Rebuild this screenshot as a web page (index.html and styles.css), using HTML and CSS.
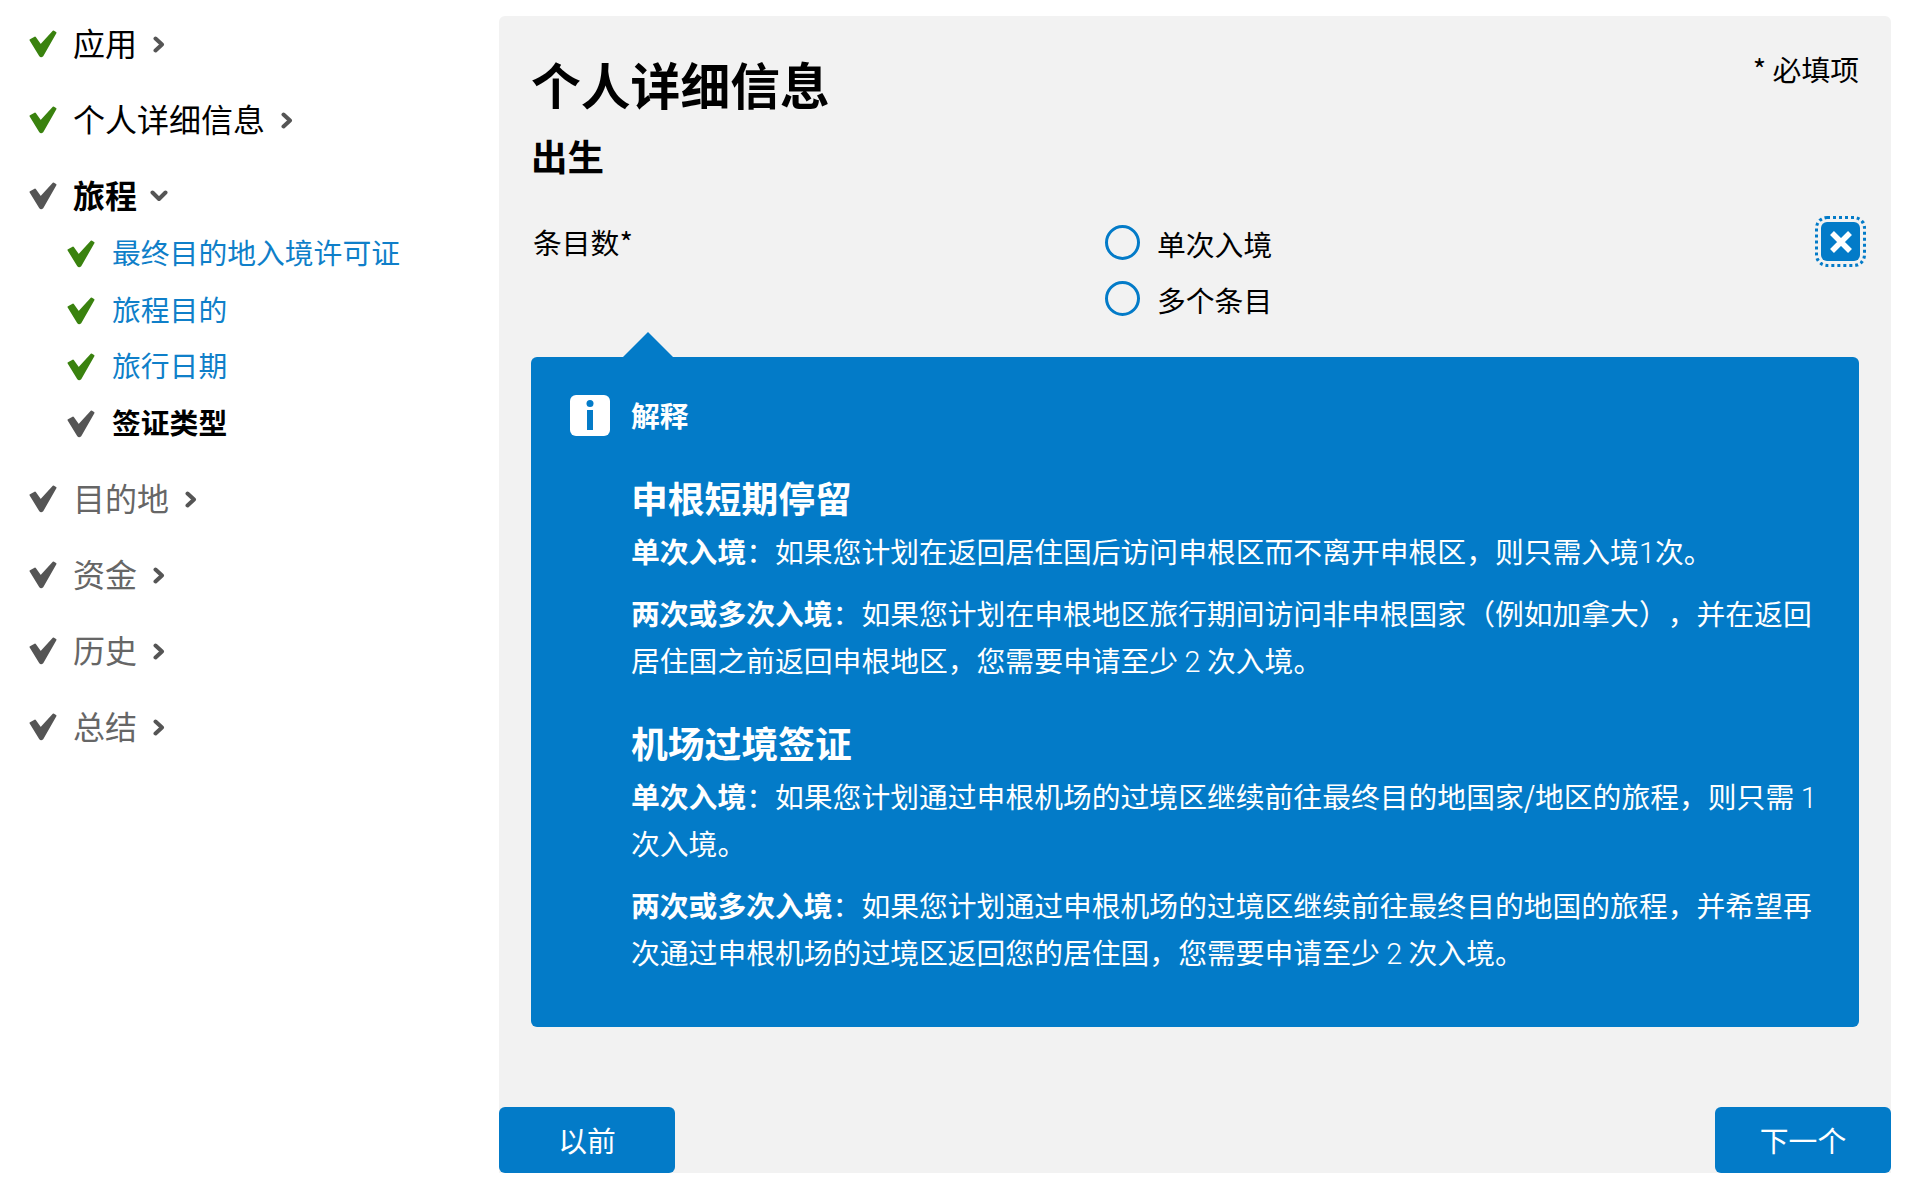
FILE: index.html
```html
<!DOCTYPE html>
<html lang="zh-CN">
<head>
    <meta charset="UTF-8">
    <meta name="viewport" content="width=device-width, initial-scale=1.0">
    <title>个人详细信息</title>
    <link rel="stylesheet" href="styles.css">
</head>
<body>
    <svg class="sprites" width="0" height="0">
        <symbol id="tick" viewBox="0 0 28 28">
            <path d="M1.5 10 L6 7.5 L11.7 15.5 L24.5 1.5 L26.5 2.8 L13.5 25.5 Q12 27 11 25.5 Z" stroke-width="2" stroke-linejoin="round"/>
        </symbol>
        <symbol id="chev-right" viewBox="0 0 12 17">
            <path d="M2.5 2.5 L9 8.5 L2.5 14.5" fill="none" stroke-width="4" stroke-linecap="round" stroke-linejoin="round"/>
        </symbol>
        <symbol id="chev-down" viewBox="0 0 18 12">
            <path d="M2.5 2.5 L9 9 L15.5 2.5" fill="none" stroke-width="4" stroke-linecap="round" stroke-linejoin="round"/>
        </symbol>
    </svg>

    <!-- Side navigation -->
    <nav class="sidebar">
        <div class="nav-row done">
            <svg class="tick"><use href="#tick"/></svg>
            <span>应用</span>
            <svg class="chev"><use href="#chev-right"/></svg>
        </div>
        <div class="nav-row done">
            <svg class="tick"><use href="#tick"/></svg>
            <span>个人详细信息</span>
            <svg class="chev"><use href="#chev-right"/></svg>
        </div>
        <div class="nav-row current">
            <svg class="tick"><use href="#tick"/></svg>
            <span>旅程</span>
            <svg class="chev-open"><use href="#chev-down"/></svg>
        </div>
        <div class="sub-list">
            <div class="sub-row"><svg class="tick green"><use href="#tick"/></svg><a href="#">最终目的地入境许可证</a></div>
            <div class="sub-row"><svg class="tick green"><use href="#tick"/></svg><a href="#">旅程目的</a></div>
            <div class="sub-row"><svg class="tick green"><use href="#tick"/></svg><a href="#">旅行日期</a></div>
            <div class="sub-row active"><svg class="tick"><use href="#tick"/></svg><span>签证类型</span></div>
        </div>
        <div class="nav-row todo">
            <svg class="tick"><use href="#tick"/></svg>
            <span>目的地</span>
            <svg class="chev"><use href="#chev-right"/></svg>
        </div>
        <div class="nav-row todo">
            <svg class="tick"><use href="#tick"/></svg>
            <span>资金</span>
            <svg class="chev"><use href="#chev-right"/></svg>
        </div>
        <div class="nav-row todo">
            <svg class="tick"><use href="#tick"/></svg>
            <span>历史</span>
            <svg class="chev"><use href="#chev-right"/></svg>
        </div>
        <div class="nav-row todo">
            <svg class="tick"><use href="#tick"/></svg>
            <span>总结</span>
            <svg class="chev"><use href="#chev-right"/></svg>
        </div>
    </nav>

    <!-- Form panel -->
    <main class="panel">
        <div class="panel-head">
            <h1>个人详细信息</h1>
            <p class="required">* 必填项</p>
        </div>
        <h2>出生</h2>

        <div class="field">
            <div class="field-label">条目数*</div>
            <div class="radios">
                <label class="radio"><span class="radio-dot"></span><span class="radio-text">单次入境</span></label>
                <label class="radio"><span class="radio-dot"></span><span class="radio-text">多个条目</span></label>
            </div>
            <button class="close-btn" type="button" aria-label="关闭">
                <svg width="22" height="22" viewBox="0 0 22 22"><path d="M2 2 L20 20 M20 2 L2 20" stroke="#fff" stroke-width="5.5" fill="none"/></svg>
            </button>
        </div>

        <section class="help">
            <div class="help-title">
                <svg class="help-icon" width="40" height="41" viewBox="0 0 40 41">
                    <rect width="40" height="41" rx="6" fill="#fff"/>
                    <circle cx="20" cy="8.5" r="3.5" fill="#037bc8"/>
                    <rect x="17" y="15" width="6" height="20" fill="#037bc8"/>
                </svg>
                <strong>解释</strong>
            </div>
            <div class="help-body">
                <h3>申根短期停留</h3>
                <p><b>单次入境</b>：如果您计划在返回居住国后访问申根区而不离开申根区，则只需入境<span class="num">1</span>次。</p>
                <p><b>两次或多次入境</b>：如果您计划在申根地区旅行期间访问非申根国家（例如加拿大），并在返回居住国之前返回申根地区，您需要申请至少 <span class="num">2</span> 次入境。</p>
                <h3 class="second">机场过境签证</h3>
                <p><b>单次入境</b>：如果您计划通过申根机场的过境区继续前往最终目的地国家/地区的旅程，则只需 <span class="num">1</span> 次入境。</p>
                <p><b>两次或多次入境</b>：如果您计划通过申根机场的过境区继续前往最终目的地国的旅程，并希望再次通过申根机场的过境区返回您的居住国，您需要申请至少 <span class="num">2</span> 次入境。</p>
            </div>
        </section>

        <div class="actions">
            <button class="btn" type="button">以前</button>
            <button class="btn" type="button">下一个</button>
        </div>
    </main>
</body>
</html>
```

FILE: styles.css
```css
html, body {
    height: 1185px;
    overflow: hidden;
}

body {
    margin: 0;
    display: flex;
    align-items: flex-start;
    background: #fff;
    color: #000;
    font-family: "Noto Sans CJK SC", "Noto Sans", sans-serif;
    font-size: 28.8px;
    text-spacing-trim: space-all;
}

.sprites {
    display: block;
    width: 0;
}

/* Side navigation */
.sidebar {
    width: 499px;
    flex-shrink: 0;
    padding-top: 13px;
    box-sizing: border-box;
}

.nav-row {
    display: flex;
    align-items: center;
    height: 62px;
    margin-bottom: 14px;
    padding-left: 29px;
    font-size: 32px;
    color: #000;
}

.nav-row span {
    margin: 0 0 5px 16px;
}

.tick {
    width: 28px;
    height: 28px;
    flex-shrink: 0;
    fill: #555;
    stroke: #555;
}

.tick.green,
.done .tick {
    fill: #3a820f;
    stroke: #3a820f;
}

.chev {
    width: 12px;
    height: 17px;
    margin-left: 16px;
    stroke: #555;
}

.chev-open {
    width: 18px;
    height: 12px;
    margin-left: 13px;
    stroke: #555;
}

.current {
    font-weight: 700;
    margin-bottom: 0;
}

.todo {
    color: #666;
}

.sub-list {
    margin-top: -1px;
    margin-bottom: 16px;
}

.sub-row {
    display: flex;
    align-items: center;
    height: 56.5px;
    padding-left: 67px;
}

.sub-row a,
.sub-row span {
    margin: 0 0 5px 17px;
}

.sub-row a {
    color: #0f7fc9;
    text-decoration: none;
}

.active {
    font-weight: 700;
}

/* Form panel */
.panel {
    width: 1392px;
    height: 1157px;
    margin-top: 16px;
    padding: 0 32px;
    box-sizing: border-box;
    background: #f2f2f2;
    border-radius: 6px 6px 0 0;
    position: relative;
}

.panel-head {
    display: flex;
    justify-content: space-between;
    align-items: flex-start;
    padding-top: 32px;
}

h1 {
    margin: 0;
    font-size: 49.8px;
    line-height: 70px;
    font-weight: 700;
}

.required {
    margin: 0;
    line-height: 42px;
}

h2 {
    margin: 12px 0 0;
    font-size: 36.5px;
    line-height: 52px;
    font-weight: 700;
}

.field {
    display: flex;
    align-items: flex-start;
    height: 136px;
    margin-top: 39px;
}

.field-label {
    width: 574px;
    padding-left: 2px;
    box-sizing: border-box;
    line-height: 42px;
}

.radios {
    flex: 1;
    display: flex;
    flex-direction: column;
    gap: 14px;
}

.radio {
    display: flex;
    align-items: center;
    height: 42px;
}

.radio-dot {
    width: 35px;
    height: 35px;
    margin-right: 17px;
    box-sizing: border-box;
    border: 3px solid #037bc8;
    border-radius: 50%;
}

.radio-text {
    margin-top: 2px;
}

.close-btn {
    width: 39px;
    height: 39px;
    margin: 0 -1px 0 0;
    position: relative;
    top: 1px;
    padding: 0;
    display: flex;
    align-items: center;
    justify-content: center;
    border: 0;
    border-radius: 6px;
    background: #037bc8;
    outline: 3px dotted #037bc8;
    outline-offset: 3px;
}

/* Explanation box */
.help {
    height: 670px;
    padding: 38px 38px 0 39px;
    box-sizing: border-box;
    background: #037bc8;
    border-radius: 6px;
    color: #fff;
    position: relative;
}

.help::before {
    content: "";
    position: absolute;
    left: 92px;
    top: -25px;
    border-left: 25px solid transparent;
    border-right: 25px solid transparent;
    border-bottom: 25px solid #037bc8;
}

.help-title {
    display: flex;
    align-items: center;
    height: 41px;
}

.help-title strong {
    margin-bottom: 2px;
}

.help-icon {
    flex-shrink: 0;
    margin-right: 21px;
}

.help-body {
    padding-left: 61px;
    margin-top: 32px;
}

h3 {
    margin: 0;
    font-size: 36.8px;
    line-height: 59px;
    font-weight: 700;
}

h3.second {
    margin-top: 30px;
}

.help p {
    margin: 0 0 15px;
    line-height: 47px;
}

.num {
    font-family: Roboto, sans-serif;
    font-weight: 300;
    line-height: 1;
}

/* Bottom buttons */
.actions {
    position: absolute;
    left: 0;
    right: 0;
    bottom: 0;
    display: flex;
    justify-content: space-between;
}

.btn {
    width: 176px;
    height: 66px;
    padding: 0 0 2px;
    border: 0;
    border-radius: 6px;
    background: #037bc8;
    color: #fff;
    font: inherit;
}
```
